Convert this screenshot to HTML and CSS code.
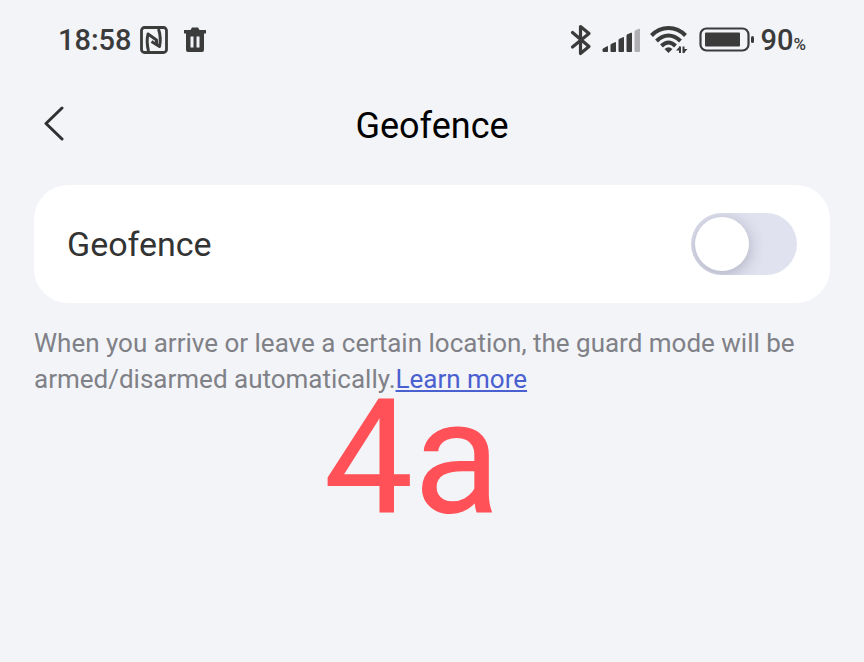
FILE: index.html
```html
<!DOCTYPE html>
<html lang="en">
<head>
    <meta charset="UTF-8">
    <meta name="viewport" content="width=device-width, initial-scale=1.0">
    <title>Geofence</title>
    <link rel="stylesheet" href="styles.css">
</head>
<body>
    <!-- Status bar -->
    <div class="status-bar">
        <div class="status-left">
            <span class="time">18:58</span>
            <svg class="icon-nfc" width="28" height="28" viewBox="0 0 28 28" fill="none" stroke="#3b3b3b" stroke-linejoin="round">
                <rect x="1.5" y="1.5" width="25" height="25" rx="3" stroke-width="2.800"/>
                <path d="M8.500 25C7 19 7 12 8 8L16.500 14V18.500" stroke-width="3"/>
                <path d="M18.500 3C20.500 9 20.500 16 19.500 20.500L11.500 15.500" stroke-width="3"/>
            </svg>
            <svg width="24" height="26" viewBox="0 0 24 26">
                <path d="M1 3H7.500L9 0.500H15L16.500 3H23V6.500H1Z" fill="#3b3b3b"/>
                <path d="M3 6H21V23Q21 25 19 25H5Q3 25 3 23Z" fill="#3b3b3b"/>
                <path d="M7.500 9.500H10.500V20.500H7.500ZM13.500 9.500H16.500V20.500H13.500Z" fill="#f2f4f8"/>
            </svg>
        </div>
        <div class="status-right">
            <svg width="22" height="34" viewBox="0 0 22 34" fill="none" stroke="#3b3b3b" stroke-width="3.200" stroke-linejoin="round" stroke-linecap="round">
                <path d="M2.500 9.500L19 23.500L10.500 30.500V3.500L19 10.500L2.500 24"/>
            </svg>
            <svg class="icon-signal" width="38" height="26" viewBox="0 0 38 26" fill="#3b3b3b" stroke="#3b3b3b" stroke-linejoin="round">
                <path d="M1 24.500V22L5.500 19.500V24.500ZM9 24.500V17.500L13.500 15.500V24.500ZM17 24.500V12.500L21.500 10.500V24.500ZM25 24.500V8L29.500 6V24.500Z"/>
                <path d="M33 24.500V4L37.500 2V24.500Z" fill="#b0b0b2" stroke="#b0b0b2"/>
            </svg>
            <svg class="icon-wifi" width="38" height="30" viewBox="0 0 38 30" fill="none" stroke="#3b3b3b" stroke-width="4">
                <path d="M1.500 10.500C11 0.500 26 0.500 35.500 10.500M6.500 16C14 8.500 23 8.500 30.500 16M11.500 21C16 16.500 21 16.500 25.500 21"/>
                <path d="M14.500 24Q18.500 20.500 22.500 24L18.500 28Z" fill="#3b3b3b" stroke="none"/>
                <path d="M30 28V21.500M33.500 28V21.500" stroke-width="2"/>
                <path d="M26 25.500L30 21V25.500ZM33.500 24H37.500L33.500 28.500Z" fill="#3b3b3b" stroke="none"/>
            </svg>
            <svg class="icon-battery" width="56" height="26" viewBox="0 0 56 26">
                <rect x="1.500" y="1.500" width="48" height="22" rx="6" fill="none" stroke="#3b3b3b" stroke-width="2.200"/>
                <rect x="6" y="5.500" width="35" height="14" rx="1" fill="#3b3b3b"/>
                <rect x="52" y="9" width="3" height="7" rx="1.500" fill="#3b3b3b"/>
            </svg>
            <span class="battery-level">90<small>%</small></span>
        </div>
    </div>

    <!-- Page header -->
    <header class="page-header">
        <button class="back-button" type="button" aria-label="Back">
            <svg width="22" height="36" viewBox="0 0 22 36" fill="none" stroke="#303030" stroke-width="3" stroke-linecap="round" stroke-linejoin="round">
                <path d="M19 2L3 17.500L19 33"/>
            </svg>
        </button>
        <h1>Geofence</h1>
    </header>

    <main class="container">
        <div class="setting-card">
            <label for="geofence-switch">Geofence</label>
            <input type="checkbox" role="switch" id="geofence-switch" class="switch">
        </div>
        <p class="description">When you arrive or leave a certain location, the guard mode will be armed/disarmed automatically.<a href="#">Learn more</a></p>
        <div class="step-mark">4a</div>
    </main>
</body>
</html>
```
FILE: styles.css
```css
* {
    box-sizing: border-box;
}
body {
    font-family: Roboto, sans-serif;
    margin: 0;
    background-color: #f2f4f8;
    color: #333;
}
svg {
    display: block;
    flex-shrink: 0;
}
.status-bar {
    display: flex;
    justify-content: space-between;
    align-items: center;
    height: 78px;
    padding: 2px 58px 0;
    font-size: 29px;
    font-weight: 500;
    color: #3b3b3b;
}
.status-left, .status-right {
    display: flex;
    align-items: center;
}
.icon-nfc {
    margin: 0 15px 0 8px;
}
.icon-signal {
    margin: 0 10px;
}
.icon-battery {
    margin: 0 6px 0 11px;
}
.battery-level small {
    font-size: 17px;
}
.page-header {
    display: grid;
    grid-template-columns: 22px 1fr 22px;
    align-items: center;
    height: 92px;
    padding: 0 43px;
}
.page-header h1 {
    margin: 4px 0 0;
    font-size: 36px;
    font-weight: 400;
    color: #000;
    text-align: center;
}
.back-button {
    padding: 0;
    border: none;
    background: none;
    cursor: pointer;
}
.container {
    padding: 15px 34px 0;
}
.setting-card {
    display: flex;
    justify-content: space-between;
    align-items: center;
    padding: 28px 33px;
    border-radius: 34px;
    background-color: #fff;
    font-size: 34px;
}
.switch {
    appearance: none;
    display: flex;
    align-items: center;
    width: 106px;
    height: 62px;
    margin: 0;
    padding: 0 4px;
    border-radius: 31px;
    background-color: #e0e2f0;
    overflow: hidden;
    cursor: pointer;
}
.switch::before {
    content: "";
    width: 54px;
    height: 54px;
    border-radius: 50%;
    background-color: #fff;
    box-shadow: 0 3px 16px rgba(60, 60, 80, 0.32);
}
.switch:checked {
    justify-content: flex-end;
    background-color: #4a62d8;
}
.description {
    margin: 22px 0 0;
    font-size: 26px;
    line-height: 36px;
    color: #808187;
}
.description a {
    color: #4a5fd0;
}
.step-mark {
    padding-right: 40px;
    font-size: 160px;
    line-height: 122px;
    text-align: center;
    color: #ff5157;
}
```
